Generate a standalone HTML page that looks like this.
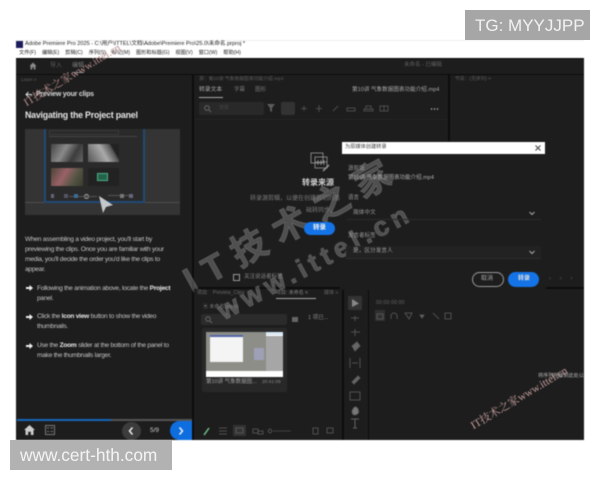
<!DOCTYPE html>
<html><head><meta charset="utf-8">
<style>
html,body{margin:0;padding:0;background:#fff;width:600px;height:480px;overflow:hidden}
body{position:relative;font-family:"Liberation Sans","Noto Sans CJK SC",sans-serif}
.a{position:absolute}
.t{position:absolute;white-space:nowrap;line-height:1}
.wm{font-weight:bold;color:rgba(150,150,150,.42);-webkit-text-stroke:.8px rgba(150,150,150,.42);transform-origin:0 100%}
svg{position:absolute;overflow:visible}
#app{position:absolute;left:0;top:0;width:600px;height:480px;filter:blur(.45px)}
</style></head><body>
<div id="app">
<!-- title area -->
<div class="a" style="left:16px;top:40px;width:568px;height:1px;background:#eee"></div>
<div class="a" style="left:16px;top:41px;width:7px;height:7px;background:#1c1c5c"></div>
<div class="t" style="left:25px;top:42px;font-size:5.600px;color:#222">Adobe Premiere Pro 2025 - C:\用户\ITTEL\文档\Adobe\Premiere Pro\25.0\未命名.prproj *</div>
<div class="t" style="left:19px;top:51px;font-size:5.200px;color:#222;word-spacing:4.5px">文件(F) 编辑(E) 剪辑(C) 序列(S) 标记(M) 图形和标题(G) 视图(V) 窗口(W) 帮助(H)</div>

<!-- app bg -->
<div class="a" style="left:16px;top:58px;width:568px;height:382px;background:#0c0c0c"></div>
<div class="a" style="left:16px;top:59px;width:568px;height:15px;background:#1d1d1d"></div>
<svg style="left:29px;top:62px" width="8" height="8" viewBox="0 0 8 8"><path d="M4 .5L.5 4H1.500V7.500H3.200V5.200H4.800V7.500H6.500V4H7.500z" fill="#8a8a8a"/></svg>
<div class="t" style="left:50px;top:63px;font-size:6px;color:#5c5c5c">导入</div>
<div class="t" style="left:72px;top:63px;font-size:6px;color:#7a7a7a">编辑</div>
<div class="a" style="left:72px;top:72px;width:12px;height:1px;background:#888"></div>
<div class="t" style="left:404px;top:63px;font-size:5.5px;color:#626262">未命名 - 已编辑</div>

<!-- left learn panel -->
<div class="a" style="left:16px;top:75px;width:176px;height:365px;background:#1d1d1d"></div>
<div class="t" style="left:21px;top:78px;font-size:4.500px;color:#5f5f5f">Learn ≡</div>
<svg style="left:25px;top:91px" width="8" height="7" viewBox="0 0 8 7"><path d="M7 3.500H1M3.500 1L1 3.500L3.500 6" stroke="#ddd" stroke-width="1" fill="none"/></svg>
<div class="t" style="left:36px;top:90.500px;font-size:7px;font-weight:bold;letter-spacing:-.2px;color:#d8d8d8">Preview your clips</div>
<div class="t" style="left:25px;top:111px;font-size:8.800px;font-weight:bold;letter-spacing:-.2px;color:#e6e6e6">Navigating the Project panel</div>

<!-- tutorial image -->
<div class="a" style="left:25px;top:129px;width:155px;height:86px;background:#343434;overflow:hidden">
  <div class="a" style="left:0;top:73px;width:155px;height:1px;background:#4d4d4d"></div>
  <div class="a" style="left:19px;top:-2px;width:97px;height:74px;background:#2a2a2a;border-left:2px solid #1f4a75;border-right:2px solid #1f4a75;border-bottom:2px solid #1f4a75"></div>
  <div class="a" style="left:24px;top:7px;width:88px;height:1px;background:#444"></div>
  <div class="a" style="left:24px;top:1px;width:68px;height:3px;border:1px solid #3a3a3a"></div>
  <div class="a" style="left:26px;top:15px;width:32px;height:18px;background:linear-gradient(120deg,#444,#8a8a8a 40%,#3c3c3c 70%,#666)"></div>
  <div class="a" style="left:63px;top:15px;width:31px;height:18px;background:linear-gradient(60deg,#555,#aaa 50%,#555 75%,#222 80%)"></div>
  <div class="a" style="left:26px;top:39px;width:32px;height:18px;background:linear-gradient(120deg,#4a4436,#9a6268 40%,#554,#3c3c30)"></div>
  <div class="a" style="left:63px;top:39px;width:31px;height:18px;background:#222"></div>
  <div class="a" style="left:72px;top:44px;width:11px;height:8px;background:#22634a;border:1px solid #4fae88;box-sizing:border-box"></div>
  <div class="a" style="left:83px;top:66px;width:25px;height:1px;background:#555"></div>
  <div class="a" style="left:59px;top:65px;width:3px;height:3px;border:1px solid #aaa;border-radius:50%"></div>
  <div class="a" style="left:44px;top:67px;width:28px;height:1px;background:#555"></div>
  <div class="a" style="left:26px;top:65px;width:3px;height:4px;background:#667"></div>
  <div class="a" style="left:39px;top:65px;width:4px;height:4px;background:#556"></div>
  <div class="a" style="left:49px;top:65px;width:4px;height:4px;background:#3d6a96"></div>
  <div class="a" style="left:95px;top:65px;width:4px;height:4px;background:#777"></div>
  <div class="a" style="left:104px;top:65px;width:4px;height:4px;background:#667"></div>
  <svg style="left:75px;top:68px" width="16" height="18" viewBox="0 0 16 18"><path d="M0 0L14 9L7 11L4 17z" fill="#c4c8cc" transform="translate(-1 -1)"/></svg>
</div>

<!-- text -->
<div class="a" style="left:25px;top:234.500px;font-size:6.600px;letter-spacing:-.25px;line-height:10.300px;color:#c4c4c4;white-space:nowrap">When assembling a video project, you'll start by<br>previewing the clips. Once you are familiar with your<br>media, you'll decide the order you'd like the clips to<br>appear.</div>
<div class="a" style="left:37px;top:283.500px;font-size:6.600px;letter-spacing:-.25px;line-height:10.300px;color:#c4c4c4;white-space:nowrap">Following the animation above, locate the <b style="color:#e8e8e8">Project</b><br>panel.</div>
<div class="a" style="left:37px;top:312px;font-size:6.600px;letter-spacing:-.25px;line-height:10.300px;color:#c4c4c4;white-space:nowrap">Click the <b style="color:#e8e8e8">Icon view</b> button to show the video<br>thumbnails.</div>
<div class="a" style="left:37px;top:341px;font-size:6.600px;letter-spacing:-.25px;line-height:10.300px;color:#c4c4c4;white-space:nowrap">Use the <b style="color:#e8e8e8">Zoom</b> slider at the bottom of the panel to<br>make the thumbnails larger.</div>
<svg style="left:26px;top:285px" width="7" height="6" viewBox="0 0 7 6"><path d="M0 2H3.500V0L7 3L3.500 6V4H0z" fill="#eee"/></svg>
<svg style="left:26px;top:314px" width="7" height="6" viewBox="0 0 7 6"><path d="M0 2H3.500V0L7 3L3.500 6V4H0z" fill="#eee"/></svg>
<svg style="left:26px;top:343px" width="7" height="6" viewBox="0 0 7 6"><path d="M0 2H3.500V0L7 3L3.500 6V4H0z" fill="#eee"/></svg>

<!-- learn footer -->
<div class="a" style="left:17px;top:419px;width:175px;height:2px;background:#555"></div>
<div class="a" style="left:17px;top:419px;width:94px;height:2px;background:#1667b8"></div>
<svg style="left:24px;top:425px" width="11" height="10" viewBox="0 0 11 10"><path d="M5.500 0L0 5H1.500V10H4.200V6.800H6.800V10H9.500V5H11z" fill="#ccc"/></svg>
<svg style="left:45px;top:425px" width="10" height="10" viewBox="0 0 10 10"><rect x=".5" y=".5" width="9" height="9" fill="none" stroke="#777"/><path d="M2 3H4M2 6.500H4M5.500 3H8M5.500 6.500H8" stroke="#777"/></svg>
<div class="a" style="left:122px;top:422px;width:19px;height:18px;border-radius:50%;background:#3c3c3c"></div>
<svg style="left:128px;top:427px" width="6" height="8" viewBox="0 0 6 8"><path d="M4.500 .5L1.500 4L4.500 7.500" stroke="#eee" stroke-width="1.500" fill="none"/></svg>
<div class="t" style="left:150px;top:428px;font-size:6.500px;color:#c8c8c8">5/9</div>
<div class="a" style="left:170px;top:421px;width:22px;height:19px;background:#0e6ee0;border-radius:10px 0 0 10px"></div>
<svg style="left:178px;top:427px" width="6" height="8" viewBox="0 0 6 8"><path d="M1.500 .5L4.500 4L1.500 7.500" stroke="#eee" stroke-width="1.500" fill="none"/></svg>

<!-- middle panel -->
<div class="a" style="left:194px;top:75px;width:254px;height:212px;background:#1d1d1d"></div>
<div class="t" style="left:199px;top:78px;font-size:4.800px;color:#5a5a5a">源：第10讲 气象数据图表功能介绍.mp4</div>
<div class="t" style="left:199px;top:88px;font-size:5.800px;color:#b0b0b0">转录文本</div>
<div class="a" style="left:199px;top:97px;width:24px;height:1px;background:#aaa"></div>
<div class="t" style="left:234px;top:88px;font-size:5.500px;color:#777">字幕</div>
<div class="t" style="left:255px;top:88px;font-size:5.500px;color:#777">图形</div>
<div class="t" style="left:352px;top:88px;font-size:5.600px;color:#a8a8a8">第10讲 气象数据图表功能介绍.mp4</div>
<div class="a" style="left:199px;top:102px;width:65px;height:13px;background:#292929;border-radius:2px"></div>
<svg style="left:204px;top:105px" width="7" height="7" viewBox="0 0 7 7"><circle cx="3" cy="3" r="2.300" fill="none" stroke="#666"/><path d="M5 5L7 7" stroke="#666"/></svg>
<div class="t" style="left:219px;top:106px;font-size:5px;color:#444">搜索</div>
<svg style="left:267px;top:104px" width="8" height="8" viewBox="0 0 8 8"><path d="M0 0H8L5 4V8L3 7V4z" fill="#5c5c5c"/></svg>
<div class="a" style="left:281px;top:102px;width:14px;height:13px;background:#333;border-radius:2px"></div>
<svg style="left:300px;top:104px" width="100" height="9" viewBox="0 0 100 9" fill="none" stroke="#4c4c4c"><path d="M4 2V7M1 4.500H7"/><path d="M19 1V8M16 4.500H22"/><path d="M33 7L38 2"/><path d="M47 7H55V4H47z"/><path d="M64 7H73V5H64zM66 5V2H71V5"/><path d="M80 2H88V7H80zM84 2V7"/></svg>
<div class="a" style="left:430px;top:108px;width:9px;height:2px;background:radial-gradient(circle,#999 40%,transparent 50%) 0 0/3px 2px"></div>
<div class="a" style="left:194px;top:119px;width:254px;height:1px;background:#242424"></div>

<!-- right panel -->
<div class="a" style="left:450px;top:75px;width:134px;height:212px;background:#1d1d1d"></div>
<div class="t" style="left:455px;top:78px;font-size:4.800px;color:#5a5a5a">节目：(无序列) ≡</div>

<!-- dialog body (beneath the watermark) -->
<div class="a" style="left:340px;top:141px;width:206px;height:149px;background:#1d1d1d"></div>

<!-- big watermark -->
<div class="t wm" style="left:195px;top:263px;font-size:36px;transform:rotate(-29deg);letter-spacing:11px">IT技术之家</div>
<div class="t wm" style="left:226px;top:298px;font-size:27px;transform:rotate(-28deg);letter-spacing:5px">www.ittel.cn</div>

<!-- transcribe source -->
<svg style="left:310px;top:152px" width="20" height="20" viewBox="0 0 20 20" fill="none" stroke="#9a9a9a" stroke-width=".8"><rect x="1" y="1" width="12" height="10"/><rect x="5" y="5" width="12" height="11"/><path d="M8 8V13M11 8V13M14 8V13M5 10H17"/><path d="M13 19L19 13" stroke-width="1.400"/></svg>
<div class="t" style="left:302px;top:179px;font-size:8px;font-weight:bold;color:#d0d0d0">转录来源</div>
<div class="t" style="left:250px;top:196px;font-size:6px;color:#7c7c7c">转录源剪辑，以便在创建剪切的基</div>
<div class="t" style="left:306px;top:208px;font-size:6px;color:#7c7c7c">础转同步。</div>
<div class="a" style="left:304px;top:222px;width:31px;height:13px;background:#1473e6;border-radius:7px"></div>
<div class="t" style="left:313px;top:225px;font-size:6.500px;font-weight:bold;color:#eee">转录</div>
<div class="a" style="left:233px;top:274px;width:5px;height:5px;border:1px solid #999"></div>
<div class="t" style="left:244px;top:275px;font-size:5.500px;color:#858585">关注说话者标签</div>

<!-- bottom project -->
<div class="a" style="left:194px;top:289px;width:148px;height:151px;background:#1d1d1d"></div>
<div class="t" style="left:197px;top:291px;font-size:5px;color:#6a6a6a;word-spacing:3px">项目: Preview_Clips</div>
<div class="t" style="left:276px;top:291px;font-size:5px;color:#808080">项目: 未命名 ≡</div>
<div class="a" style="left:276px;top:298px;width:40px;height:1px;background:#aaa"></div>
<div class="t" style="left:324px;top:291px;font-size:5px;color:#666">媒体 »</div>
<div class="t" style="left:203px;top:305px;font-size:5px;color:#777">▣ 未命名.prproj</div>
<div class="a" style="left:201px;top:314px;width:86px;height:11px;background:#2b2b2b;border-radius:2px"></div>
<svg style="left:205px;top:316px" width="7" height="7" viewBox="0 0 7 7"><circle cx="3" cy="3" r="2.300" fill="none" stroke="#666"/><path d="M5 5L7 7" stroke="#666"/></svg>
<div class="a" style="left:292px;top:317px;width:6px;height:5px;background:#666"></div>
<div class="t" style="left:308px;top:316px;font-size:5.500px;color:#8a8a8a">1 项已...</div>
<!-- watermark tail over project panel -->
<div class="a" style="left:194px;top:289px;width:148px;height:40px;overflow:hidden">
  <div class="t wm" style="left:32px;top:9px;font-size:27px;transform:rotate(-28deg);letter-spacing:5px">www.ittel.cn</div>
</div>

<div class="a" style="left:202px;top:328px;width:85px;height:64px;background:#282828;border-radius:2px"></div>
<div class="a" style="left:206px;top:332px;width:77px;height:45px;background:#fff;overflow:hidden">
  <div class="a" style="left:0;top:0;width:60px;height:39px;background:#8e8e88"></div>
  <div class="a" style="left:60px;top:4px;width:17px;height:35px;background:#a6a6a6"></div>
  <div class="a" style="left:4px;top:5px;width:33px;height:25px;background:#f4f4f4"></div>
  <div class="a" style="left:4px;top:3px;width:33px;height:2px;background:#5566a8"></div>
  <div class="a" style="left:48px;top:16px;width:10px;height:12px;background:#9ea0b8"></div>
  <div class="a" style="left:60px;top:0;width:17px;height:3px;background:#d8e8f4"></div>
</div>
<div class="t" style="left:206px;top:380px;font-size:5.500px;color:#a0a0a0">第10讲 气象数据图...</div>
<div class="t" style="left:262px;top:381px;font-size:4.800px;color:#8a8a8a">20:41:09</div>
<svg style="left:203px;top:426px" width="136" height="10" viewBox="0 0 136 10" fill="none" stroke="#5f5f5f" stroke-width=".8">
<path d="M1 9L6 2" stroke="#6fc28a" stroke-width="1.500"/>
<path d="M16 2H24M16 5H24M16 8H24"/>
<rect x="30" y="-1" width="13" height="11" rx="1" fill="#333" stroke="none"/>
<path d="M33 2H40V7H33z"/>
<path d="M50 3H55V7H50zM55 5H60V8H55z"/>
<circle cx="67" cy="5" r="1.800"/><path d="M70 5H88" stroke="#4c4c4c"/>
<path d="M110 2H115V8H110z"/><path d="M124 2H130V7H124z"/>
</svg>

<!-- tools -->
<div class="a" style="left:344px;top:289px;width:24px;height:151px;background:#1d1d1d"></div>
<div class="a" style="left:348px;top:296px;width:14px;height:14px;background:#333;border-radius:1px"></div>
<svg style="left:349px;top:296px" width="14" height="134" viewBox="0 0 14 134" fill="none" stroke="#5f5f5f" stroke-width=".8">
<path d="M3 3L10 7.500L3 11z" fill="#888" stroke="none"/>
<path d="M2 22H10M6 20V25"/><path d="M2 36H11M6 33V40"/>
<path d="M3 50L8 46L11 50L6 55z" fill="#666"/>
<path d="M1 62V72M11 62V72M3 67H9"/>
<path d="M3 86L9 80L11 82L5 88z" fill="#666"/>
<rect x="1" y="96" width="10" height="8"/>
<path d="M3 115Q6 108 9 113Q11 118 6 119Q3 119 3 115z" fill="#777"/>
<path d="M2 123H10M6 123V132M4 132H8" stroke="#777"/>
</svg>

<!-- timeline -->
<div class="a" style="left:369px;top:289px;width:215px;height:151px;background:#1d1d1d"></div>
<div class="t" style="left:376px;top:301px;font-size:5px;color:#666;letter-spacing:.2px">00:00:00:00</div>
<div class="a" style="left:375px;top:310px;width:10px;height:11px;background:#303030"></div>
<svg style="left:376px;top:312px" width="70" height="8" viewBox="0 0 70 8" fill="none" stroke="#5f5f5f" stroke-width=".8"><path d="M1 2H7V7H1z"/><path d="M15 7V3Q18 -1 21 3V7"/><path d="M29 1H36L33 7z"/><path d="M44 3H48L46 6z" fill="#5f5f5f"/><path d="M57 1L63 7"/><path d="M69 1H75V7H69z"/></svg>
<div class="t" style="left:538px;top:374px;font-size:5.100px;color:#b4b4b4">将序列拖放到此处以</div>

<!-- dialog -->
<div class="a" style="left:342px;top:142px;width:203px;height:12px;background:#fff"></div>
<div class="t" style="left:345px;top:145px;font-size:5.200px;color:#444">为原媒体创建转录</div>
<svg style="left:535px;top:145px" width="6" height="6" viewBox="0 0 6 6"><path d="M.5 .5L5.500 5.500M5.500 .5L.5 5.500" stroke="#444"/></svg>
<div class="t" style="left:348px;top:167px;font-size:5.500px;color:#999">源剪辑</div>
<div class="t" style="left:348px;top:176px;font-size:5.500px;color:#b0b0b0">第10讲 气象数据图表功能介绍.mp4</div>
<div class="t" style="left:348px;top:196px;font-size:5.500px;color:#999">语言</div>
<div class="a" style="left:346px;top:219px;width:195px;height:1px;background:#2a2a2a"></div>
<div class="t" style="left:353px;top:210.500px;font-size:5.700px;color:#9a9a9a">简体中文</div>
<svg style="left:529px;top:211px" width="6" height="5" viewBox="0 0 6 5"><path d="M.5 1L3 3.500L5.500 1" stroke="#aaa" fill="none"/></svg>
<div class="t" style="left:348px;top:234px;font-size:5.500px;color:#999">发言者标签</div>
<div class="a" style="left:346px;top:246px;width:195px;height:12px;background:#222;border-bottom:1px solid #2e2e2e"></div>
<div class="t" style="left:353px;top:249px;font-size:5.700px;color:#a0a0a0">是，区分发言人</div>
<svg style="left:529px;top:250px" width="6" height="5" viewBox="0 0 6 5"><path d="M.5 1L3 3.500L5.500 1" stroke="#aaa" fill="none"/></svg>
<div class="a" style="left:472px;top:272px;width:30px;height:13px;border:1px solid #999;border-radius:7.500px;box-sizing:content-box"></div>
<div class="t" style="left:481px;top:275.500px;font-size:6px;color:#aaa">取消</div>
<div class="a" style="left:508px;top:272px;width:31px;height:15px;background:#1473e6;border-radius:7.500px"></div>
<div class="t" style="left:518px;top:276px;font-size:6px;font-weight:bold;color:#ddd">转录</div>
<div class="t" style="left:549px;top:276px;font-size:6px;color:#555;word-spacing:7px">‹ ‹ ›</div>

<!-- small red watermarks -->
<div class="t" style="left:28px;top:98px;font-family:'Liberation Serif','Noto Serif CJK SC',serif;font-size:11px;color:#b98e8e;transform:rotate(-31deg);transform-origin:0 100%">IT技术之家www.ittel.cn</div>
<div class="t" style="left:475px;top:421px;font-family:'Liberation Serif','Noto Serif CJK SC',serif;font-size:11px;color:#c9a0a0;transform:rotate(-31deg);transform-origin:0 100%">IT技术之家www.ittel.cn</div>
</div>

<!-- overlay badges -->
<div class="a" style="left:465px;top:10px;width:125px;height:30px;background:#a6a6a6"></div>
<div class="t" style="left:475px;top:17px;font-size:17px;color:#f2f2f2">TG: MYYJJPP</div>
<div class="a" style="left:10px;top:440px;width:162px;height:30px;background:#b2b2b2"></div>
<div class="t" style="left:20px;top:447px;font-size:17.300px;color:#f4f4f4">www.cert-hth.com</div>
</body></html>
